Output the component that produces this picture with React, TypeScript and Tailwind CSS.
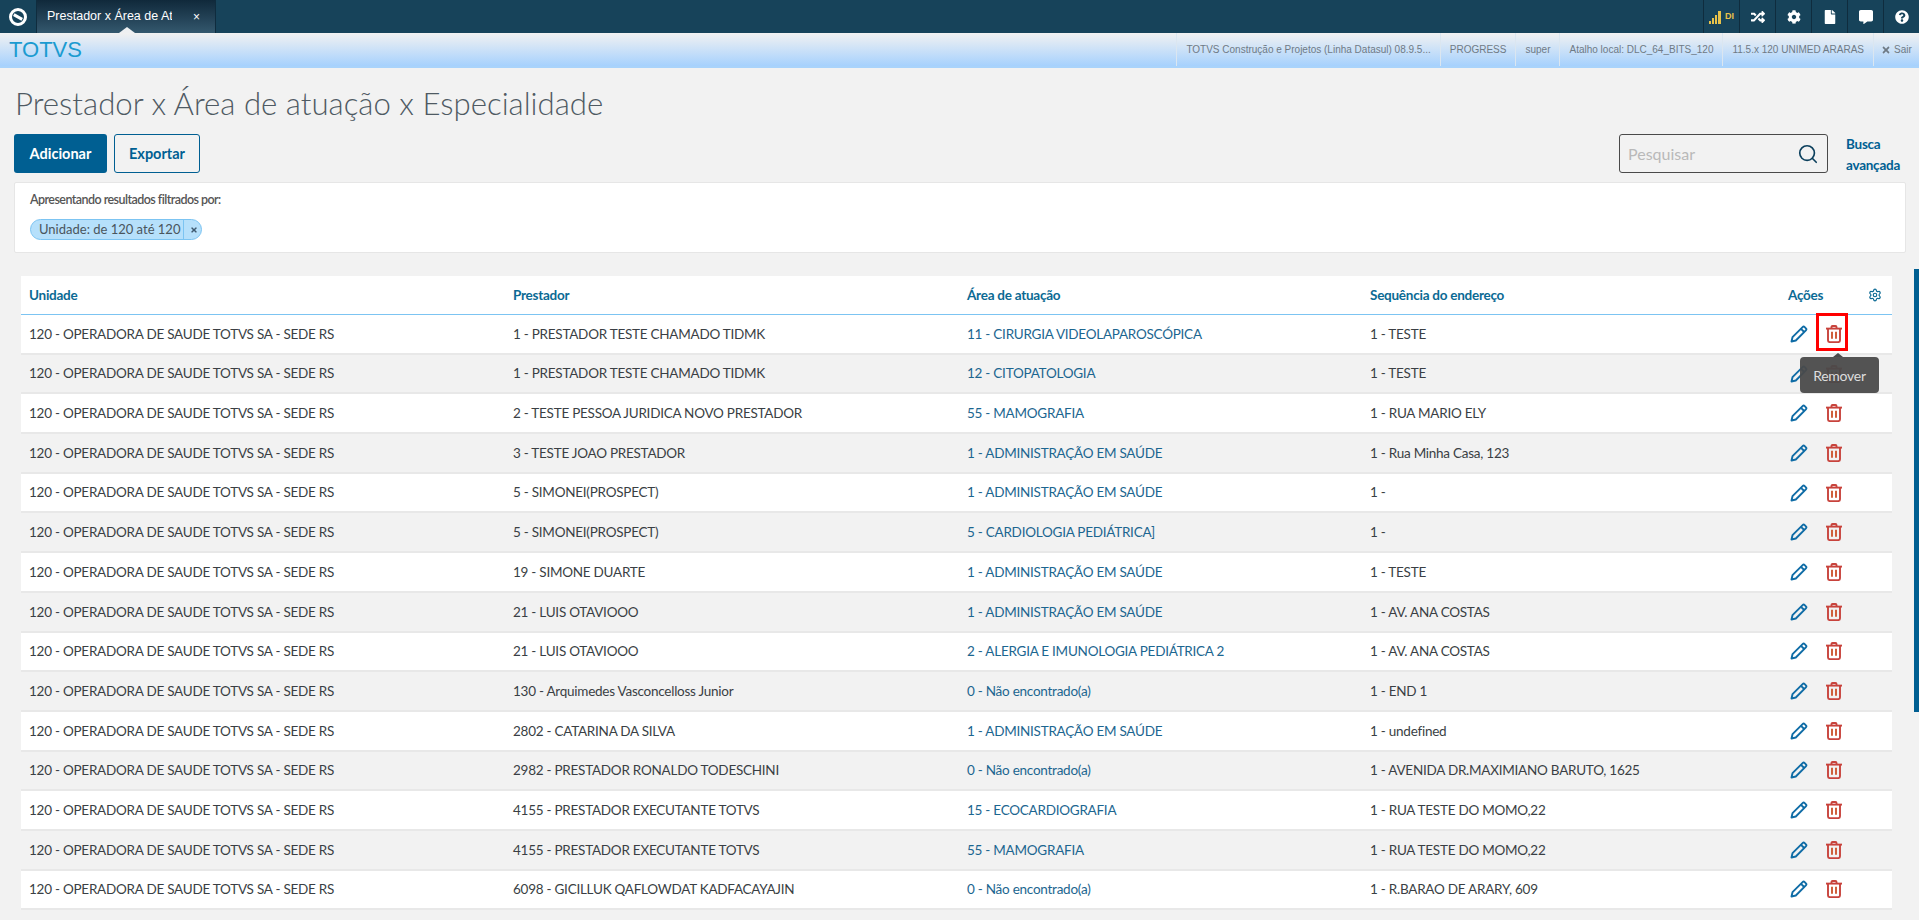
import { Search, Settings } from "lucide-react";
import { FaCog, FaCommentAlt, FaFile, FaQuestionCircle, FaRandom, FaTimes } from "react-icons/fa";

const UNIT = "120 - OPERADORA DE SAUDE TOTVS SA - SEDE RS";

const rows = [
  ["1 - PRESTADOR TESTE CHAMADO TIDMK", "11 - CIRURGIA VIDEOLAPAROSCÓPICA", "1 - TESTE"],
  ["1 - PRESTADOR TESTE CHAMADO TIDMK", "12 - CITOPATOLOGIA", "1 - TESTE"],
  ["2 - TESTE PESSOA JURIDICA NOVO PRESTADOR", "55 - MAMOGRAFIA", "1 - RUA MARIO ELY"],
  ["3 - TESTE JOAO PRESTADOR", "1 - ADMINISTRAÇÃO EM SAÚDE", "1 - Rua Minha Casa, 123"],
  ["5 - SIMONEI(PROSPECT)", "1 - ADMINISTRAÇÃO EM SAÚDE", "1 -"],
  ["5 - SIMONEI(PROSPECT)", "5 - CARDIOLOGIA PEDIÁTRICA]", "1 -"],
  ["19 - SIMONE DUARTE", "1 - ADMINISTRAÇÃO EM SAÚDE", "1 - TESTE"],
  ["21 - LUIS OTAVIOOO", "1 - ADMINISTRAÇÃO EM SAÚDE", "1 - AV. ANA COSTAS"],
  ["21 - LUIS OTAVIOOO", "2 - ALERGIA E IMUNOLOGIA PEDIÁTRICA 2", "1 - AV. ANA COSTAS"],
  ["130 - Arquimedes Vasconcelloss Junior", "0 - Não encontrado(a)", "1 - END 1"],
  ["2802 - CATARINA DA SILVA", "1 - ADMINISTRAÇÃO EM SAÚDE", "1 - undefined"],
  ["2982 - PRESTADOR RONALDO TODESCHINI", "0 - Não encontrado(a)", "1 - AVENIDA DR.MAXIMIANO BARUTO, 1625"],
  ["4155 - PRESTADOR EXECUTANTE TOTVS", "15 - ECOCARDIOGRAFIA", "1 - RUA TESTE DO MOMO,22"],
  ["4155 - PRESTADOR EXECUTANTE TOTVS", "55 - MAMOGRAFIA", "1 - RUA TESTE DO MOMO,22"],
  ["6098 - GICILLUK QAFLOWDAT KADFACAYAJIN", "0 - Não encontrado(a)", "1 - R.BARAO DE ARARY, 609"],
];

const envInfo = [
  "TOTVS Construção e Projetos (Linha Datasul) 08.9.5...",
  "PROGRESS",
  "super",
  "Atalho local: DLC_64_BITS_120",
  "11.5.x 120 UNIMED ARARAS",
];

const PencilIcon = () => (
  <svg width="18" height="18" viewBox="0 0 18 18" fill="none" stroke="#0f6ca6" strokeWidth="1.9" strokeLinejoin="round">
    <path d="M1.5 16.5l1-4.3L12.6 2.1a1.5 1.5 0 0 1 2.1 0l1.2 1.2a1.5 1.5 0 0 1 0 2.1L5.8 15.5z" />
    <path d="M11 3.8l3.2 3.2" />
  </svg>
);

const TrashIcon = () => (
  <svg width="18" height="18" viewBox="0 0 18 18" fill="none" stroke="#c8433c" strokeWidth="1.9">
    <path d="M1 3.6h16" />
    <path d="M6.5 3.2V2a1 1 0 0 1 1-1h3a1 1 0 0 1 1 1v1.2" />
    <path d="M3 3.8v11.4a1.9 1.9 0 0 0 1.9 1.9h8.2a1.9 1.9 0 0 0 1.9-1.9V3.8" />
    <path d="M7 6.8v7M11 6.8v7" stroke="#cf5f3c" strokeWidth="2" />
  </svg>
);

const Logo = () => (
  <svg width="20" height="20" viewBox="0 0 20 20" fill="none">
    <circle cx="10" cy="10" r="7.5" stroke="#fff" strokeWidth="3" />
    <path d="M5.8 7.6l8.4 4.8" stroke="#fff" strokeWidth="3" />
  </svg>
);

const TopBar = () => (
  <div className="flex h-[33px] shrink-0 bg-[#17435a] font-['Liberation_Sans',sans-serif]">
    <div className="flex w-[36px] items-center justify-center">
      <Logo />
    </div>
    <div className="relative flex w-[180px] items-center border-x border-[#0f2c3e] bg-gradient-to-b from-[#10293b] to-[#34586e] pl-[10px] text-[12.5px] text-white">
      <span className="w-[125px] overflow-hidden whitespace-nowrap">Prestador x Área de Atuação</span>
      <span className="ml-[21px] text-[12px]">×</span>
      <span className="absolute bottom-0 left-[82px] size-0 border-x-[8px] border-b-[6px] border-x-transparent border-b-[#eef0f2]" />
    </div>
    <div className="ml-auto flex">
      <div className="flex w-[36px] items-center justify-center gap-[2px] border-l border-[#0f2c3e] text-[#e8c24a]">
        <svg width="14" height="14" viewBox="0 0 14 14" fill="#e8c24a">
          <path d="M0 11h2v3H0zM3 8h2v6H3zM6 5h2v9H6zM9 1h3v13H9z" />
        </svg>
        <span className="text-[9px] font-bold">DI</span>
      </div>
      {[FaRandom, FaCog, FaFile, FaCommentAlt, FaQuestionCircle].map((Icon, i) => (
        <div key={i} className="flex w-[36px] items-center justify-center border-l border-[#0f2c3e] text-white">
          <Icon size={14} />
        </div>
      ))}
    </div>
  </div>
);

const EnvBar = () => (
  <div className="flex h-[35px] shrink-0 items-stretch border-b-2 border-[#a9d3fb] bg-gradient-to-b from-[#f1f1f1] to-[#a6d1fd] font-['Liberation_Sans',sans-serif]">
    <span className="ml-[9px] self-center text-[22px] leading-none text-[#1b9bd1]">TOTVS</span>
    <div className="ml-auto flex text-[10px] text-[#6f7a85]">
      {envInfo.map((item) => (
        <span key={item} className="flex items-center whitespace-nowrap border-l border-[#dbe6f0] px-[9px]">
          {item}
        </span>
      ))}
      <span className="flex w-[46px] items-center gap-[3px] border-l border-[#dbe6f0] pl-[7px]">
        <FaTimes size={10} />
        Sair
      </span>
    </div>
  </div>
);

const Toolbar = () => (
  <div className="mt-[12px] flex h-[39px] items-stretch pl-[14px] pr-[9px] text-[14.5px]">
    <button className="w-[93px] rounded-[3px] bg-[#005f92] font-bold text-white">Adicionar</button>
    <button className="ml-[7px] w-[86px] rounded-[3px] border border-[#005f92] font-bold text-[#005f92]">
      Exportar
    </button>
    <div className="ml-auto flex w-[209px] items-center justify-between rounded-[3px] border border-[#4a4a4a] pl-[8px] pr-[8px]">
      <span className="text-[16px] text-[#b9b9b9]">Pesquisar</span>
      <Search size={22} strokeWidth={1.8} className="text-[#0b3f5c]" />
    </div>
    <div className="ml-[18px] flex w-[59px] flex-col justify-center pt-[2px] text-[13.5px] font-bold leading-[21px] tracking-[-0.25px] text-[#005f92]">
      <span>Busca</span>
      <span>avançada</span>
    </div>
  </div>
);

const FilterCard = () => (
  <div className="ml-[14px] mr-[8px] mt-[9px] h-[71px] rounded-[2px] border border-[#e6e6e6] bg-white pl-[15px] pt-[8px]">
    <p className="text-[12.5px] font-semibold leading-[18px] tracking-[-0.55px] text-[#555]">Apresentando resultados filtrados por:</p>
    <div className="mt-[10px] flex h-[21px] w-[172px] items-center rounded-full border border-[#7cc4f2] bg-[#b6e0fb] text-[13px] text-[#4a555d]">
      <span className="w-[153px] whitespace-nowrap border-r border-[#7cc4f2] pl-[8px] leading-[19px]">Unidade: de 120 até 120</span>
      <FaTimes size={8} className="ml-[6px] text-[#3f5a70]" />
    </div>
  </div>
);

const gridCols = "grid grid-cols-[484px_454px_403px_418px_1fr] items-center pl-[8px]";

const Actions = ({ dim }: { dim?: boolean }) => (
  <div className={`flex items-center gap-[17px] pl-[2px] ${dim ? "opacity-30" : ""}`}>
    <PencilIcon />
    <TrashIcon />
  </div>
);

const Table = () => (
  <div className="ml-[21px] mr-[22px] mt-[23px] text-[13.5px] tracking-[-0.25px]">
    <div className={`${gridCols} h-[39px] border-b border-[#7cc4f2] bg-white font-bold text-[#0b6a94]`}>
      <span>Unidade</span>
      <span>Prestador</span>
      <span>Área de atuação</span>
      <span>Sequência do endereço</span>
      <div className="flex items-center justify-between pr-[10px]">
        <span>Ações</span>
        <Settings size={14} className="text-[#0b6a94]" />
      </div>
    </div>
    {rows.map((row, i) => (
      <div
        key={i}
        className={`${gridCols} relative h-[39.7px] border-b-2 border-[#e8e8e8] text-[#3a3f44] ${i % 2 === 0 ? "bg-white" : "bg-[#f2f2f2]"}`}
      >
        <span>{UNIT}</span>
        <span>{row[0]}</span>
        <span className="text-[#1c6690]">{row[1]}</span>
        <span>{row[2]}</span>
        <Actions />
        {i === 0 && (
          <>
            <span className="absolute left-[1795px] top-[-2px] h-[38px] w-[32px] border-[3px] border-[#ff0000]" />
            <div className="absolute left-[1779px] top-[42px] z-10 flex h-[36px] w-[79px] items-center justify-center rounded-[4px] bg-[#4a4a4a]/95 text-[14px] text-[#ddd]">
              Remover
              <span className="absolute left-[33px] top-[-4px] size-0 border-x-[5px] border-b-[4px] border-x-transparent border-b-[#4a4a4a]" />
            </div>
          </>
        )}
      </div>
    ))}
    <div className={`${gridCols} h-[39.7px]`}>
      <span />
      <span />
      <span />
      <span />
      <Actions dim />
    </div>
  </div>
);

export default function App() {
  return (
    <div className="flex h-[920px] flex-col overflow-hidden bg-[#f2f2f2] font-['Lato',sans-serif]">
      <TopBar />
      <EnvBar />
      <div className="flex min-h-0 flex-1">
        <div className="min-w-0 flex-1">
          <h1 className="mt-[16px] pl-[15px] text-[31.2px] font-light leading-[38px] text-[#4f5a63]">
            Prestador x Área de atuação x Especialidade
          </h1>
          <Toolbar />
          <FilterCard />
          <Table />
        </div>
        <div className="w-[5px] shrink-0 pt-[201px]">
          <div className="h-[443px] bg-[#005f92]" />
        </div>
      </div>
    </div>
  );
}
